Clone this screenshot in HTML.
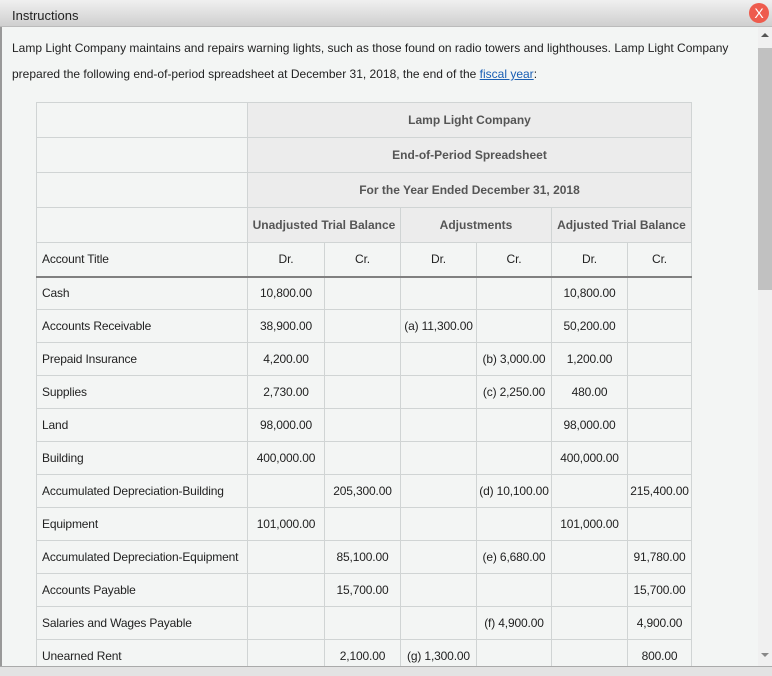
<!DOCTYPE html>
<html><head><style>
*{margin:0;padding:0;box-sizing:border-box}
body{width:772px;height:671px;overflow:hidden;background:#f3f5f4;font-family:"Liberation Sans",Arial,sans-serif;position:relative;color:#222}
.hdr{position:absolute;left:0;top:0;width:772px;height:27px;background:linear-gradient(#f0f0f0,#cfcfcf);border-bottom:1px solid #bbb}
.hdr span{position:absolute;left:12px;top:8px;font-size:13px;color:#222}
.x{position:absolute;left:749px;top:3px;width:20px;height:20px;border-radius:50%;background:#ee5b4d;color:#fff;font-size:14px;text-align:center;line-height:20px;z-index:3}
.lb{position:absolute;left:0;top:27px;width:2px;height:644px;background:#999;z-index:3}
.sb{position:absolute;left:758px;top:27px;width:14px;height:640px;background:#f0f0f0}
.thumb{position:absolute;left:758px;top:48px;width:14px;height:242px;background:#c1c1c1}
.up{position:absolute;left:761px;top:33px;border:4px solid transparent;border-bottom:4px solid #555;border-top:0}
.dn{position:absolute;left:761px;top:653px;border:4px solid transparent;border-top:4px solid #888;border-bottom:0}
.bot{position:absolute;left:0;top:666px;width:772px;height:10px;background:#e3e3e3;border-top:1px solid #aaa;z-index:3}
.p{position:absolute;left:12px;top:35px;font-size:12px;line-height:26px;color:#222;width:740px}
.p a{color:#1a5fb4;text-decoration:underline}
table{position:absolute;left:36px;top:102px;border-collapse:collapse;table-layout:fixed;font-size:12px;letter-spacing:-0.15px}
td{border:1px solid #d0d4d4;text-align:center;white-space:nowrap;overflow:visible;padding:0}
tr.h td{height:35px}
tr.h td.g{background:#ececec;font-weight:bold;color:#555;letter-spacing:0}
tr.cols td{height:34px;border-bottom:2px solid #808080}
tr.b td{height:33px}
td.l{text-align:left;padding-left:5px}
</style></head><body>
<div class="hdr"><span>Instructions</span></div>
<div class="x">X</div>
<div class="lb"></div>
<div class="sb"></div><div class="thumb"></div><div class="up"></div><div class="dn"></div>
<div class="bot"></div>
<div class="p">Lamp Light Company maintains and repairs warning lights, such as those found on radio towers and lighthouses. Lamp Light Company<br>prepared the following end-of-period spreadsheet at December 31, 2018, the end of the <a>fiscal year</a>:</div>
<table>
<colgroup><col style="width:211px"><col style="width:77px"><col style="width:76px"><col style="width:76px"><col style="width:75px"><col style="width:76px"><col style="width:64px"></colgroup>
<tr class="h"><td></td><td class="g" colspan="6">Lamp Light Company</td></tr>
<tr class="h"><td></td><td class="g" colspan="6">End-of-Period Spreadsheet</td></tr>
<tr class="h"><td></td><td class="g" colspan="6">For the Year Ended December 31, 2018</td></tr>
<tr class="h"><td></td><td class="g" colspan="2">Unadjusted Trial Balance</td><td class="g" colspan="2">Adjustments</td><td class="g" colspan="2">Adjusted Trial Balance</td></tr>
<tr class="cols"><td class="l">Account Title</td><td>Dr.</td><td>Cr.</td><td>Dr.</td><td>Cr.</td><td>Dr.</td><td>Cr.</td></tr>
<tr class="b"><td class="l">Cash</td><td>10,800.00</td><td></td><td></td><td></td><td>10,800.00</td><td></td></tr>
<tr class="b"><td class="l">Accounts Receivable</td><td>38,900.00</td><td></td><td>(a) 11,300.00</td><td></td><td>50,200.00</td><td></td></tr>
<tr class="b"><td class="l">Prepaid Insurance</td><td>4,200.00</td><td></td><td></td><td>(b) 3,000.00</td><td>1,200.00</td><td></td></tr>
<tr class="b"><td class="l">Supplies</td><td>2,730.00</td><td></td><td></td><td>(c) 2,250.00</td><td>480.00</td><td></td></tr>
<tr class="b"><td class="l">Land</td><td>98,000.00</td><td></td><td></td><td></td><td>98,000.00</td><td></td></tr>
<tr class="b"><td class="l">Building</td><td>400,000.00</td><td></td><td></td><td></td><td>400,000.00</td><td></td></tr>
<tr class="b"><td class="l">Accumulated Depreciation-Building</td><td></td><td>205,300.00</td><td></td><td>(d) 10,100.00</td><td></td><td>215,400.00</td></tr>
<tr class="b"><td class="l">Equipment</td><td>101,000.00</td><td></td><td></td><td></td><td>101,000.00</td><td></td></tr>
<tr class="b"><td class="l">Accumulated Depreciation-Equipment</td><td></td><td>85,100.00</td><td></td><td>(e) 6,680.00</td><td></td><td>91,780.00</td></tr>
<tr class="b"><td class="l">Accounts Payable</td><td></td><td>15,700.00</td><td></td><td></td><td></td><td>15,700.00</td></tr>
<tr class="b"><td class="l">Salaries and Wages Payable</td><td></td><td></td><td></td><td>(f) 4,900.00</td><td></td><td>4,900.00</td></tr>
<tr class="b"><td class="l">Unearned Rent</td><td></td><td>2,100.00</td><td>(g) 1,300.00</td><td></td><td></td><td>800.00</td></tr>
</table>
</body></html>
